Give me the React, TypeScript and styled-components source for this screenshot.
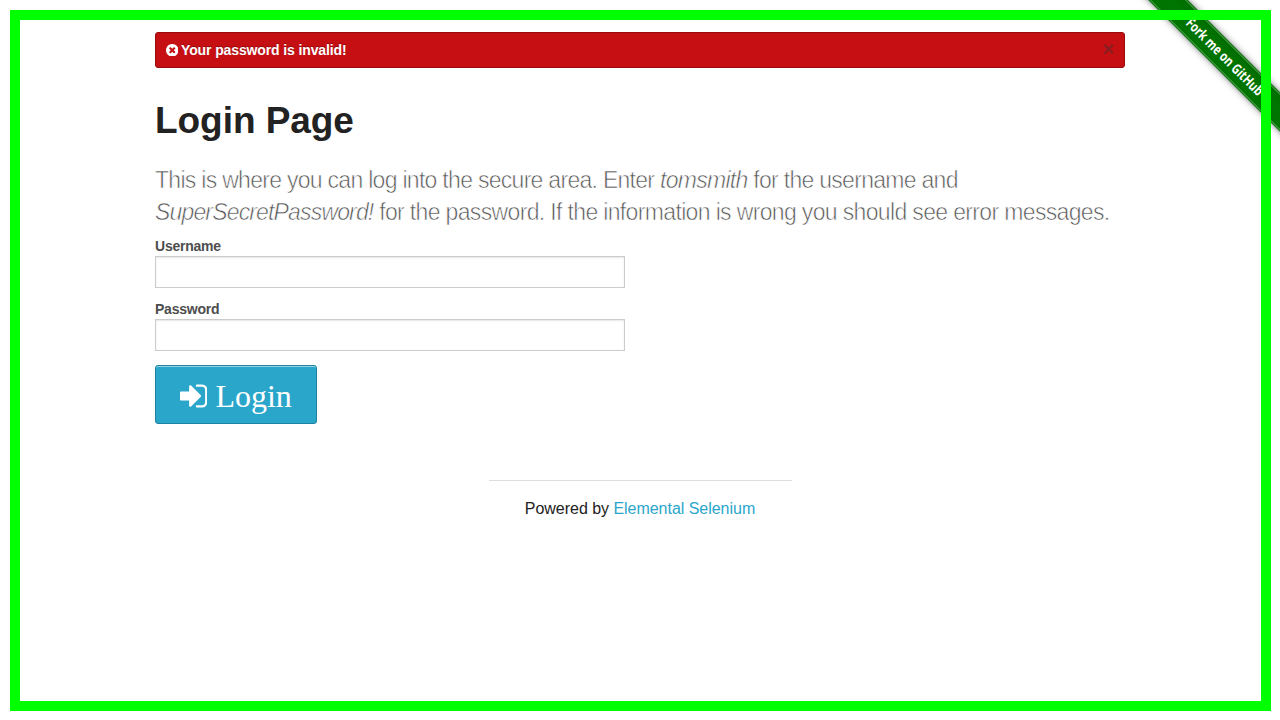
import React from "react";
import styled, { createGlobalStyle } from "styled-components";

const GlobalStyle = createGlobalStyle`
  * { box-sizing: border-box; }
  body { margin: 0; background: #fff; color: #222; overflow: hidden;
    font-family: "Liberation Sans", Arial, sans-serif; font-size: 16px; }
`;

const Page = styled.div`
  position: relative;
  width: 1280px;
  height: 720px;
  overflow: hidden;
  padding-top: 32px;
`;

const Frame = styled.div`
  position: absolute;
  left: 10px;
  top: 10px;
  width: 1261px;
  height: 701px;
  border: 10px solid #00ff00;
  pointer-events: none;
`;

const RibbonBox = styled.a`
  position: absolute;
  top: 0;
  right: 0;
  width: 149px;
  height: 149px;
  overflow: hidden;
`;

const Ribbon = styled.span`
  position: absolute;
  left: -31.5px;
  top: 43px;
  width: 250px;
  height: 28px;
  padding: 1px 0;
  background: linear-gradient(#006c00, #007500 45%, #007200);
  box-shadow: 0 0 6px rgba(0, 0, 0, 0.5);
  transform: rotate(45deg);
`;

const RibbonLabel = styled.span`
  display: block;
  height: 26px;
  border: solid #4c9c4c;
  border-width: 1px 0;
  color: #fff;
  font: bold 14px/23px "Open Sans", "Noto Sans", sans-serif;
  text-align: center;
  white-space: nowrap;
`;

const RibbonText = styled.span`
  display: inline-block;
  transform: scaleX(0.78);
`;

const Container = styled.main`
  width: 970px;
  margin: 0 auto;
`;

const Alert = styled.div`
  display: flex;
  align-items: center;
  height: 36px;
  padding: 0 10px;
  background: #c60f13;
  border: 1px solid #970b0e;
  border-radius: 3px;
  color: #fff;
  font-size: 14px;
  font-weight: bold;
  letter-spacing: -0.12px;
  text-shadow: 0 -1px rgba(0, 0, 0, 0.3);
`;

const AlertIcon = styled.svg`
  width: 12.5px;
  height: 12.5px;
  margin: 0 3px 0 -0.5px;
  fill: #fff;
`;

const Close = styled.span`
  margin: -2px 0 0 auto;
  color: #333;
  opacity: 0.4;
  font-size: 20px;
  line-height: 20px;
  font-weight: bold;
  text-shadow: none;
`;

const Title = styled.h1`
  margin: 31px 0 0;
  font-size: 37px;
  line-height: 44px;
  font-weight: bold;
  letter-spacing: -0.05px;
`;

const Lead = styled.p`
  margin: 21px 0 0;
  color: #555;
  font-size: 23px;
  line-height: 32px;
  -webkit-text-stroke: 0.6px #fff;
`;

const Line = styled.span<{ $spacing: string }>`
  display: block;
  white-space: nowrap;
  letter-spacing: ${(p) => p.$spacing};
`;

const Secret = styled.em`
  letter-spacing: -0.84px;
`;

const Form = styled.form`
  display: flex;
  flex-direction: column;
  align-items: flex-start;
  padding-top: 8px;
`;

const Label = styled.label`
  color: #4d4d4d;
  font-size: 14px;
  font-weight: bold;
  line-height: 20px;
  letter-spacing: -0.23px;
`;

const Input = styled.input`
  width: 470px;
  height: 32px;
  margin: 0 0 11px;
  padding: 0 5px;
  border: 1px solid #ccc;
  border-radius: 0;
  background: #fff;
  box-shadow: inset 0 1px 2px rgba(0, 0, 0, 0.1);
  outline: none;
`;

const Button = styled.button`
  display: flex;
  align-items: center;
  width: 162px;
  height: 59px;
  margin-top: 3px;
  padding: 3px 0 0 24px;
  border: 1px solid #1e83a3;
  border-radius: 3px;
  background: #2ba6cb;
  box-shadow: inset 0 1px 0 rgba(255, 255, 255, 0.5);
  color: #fff;
  font: 32px/36px "Liberation Serif", "Times New Roman", serif;
`;

const ButtonIcon = styled.svg`
  width: 27.4px;
  height: 32px;
  margin: -1px 8px 0 0;
  fill: #fff;
`;

const Footer = styled.footer`
  width: 303px;
  margin: 56px auto 0;
  padding-top: 17px;
  border-top: 1px solid #ddd;
  text-align: center;
  line-height: 22px;
  letter-spacing: -0.03px;
  white-space: nowrap;
`;

const Link = styled.a`
  color: #2ba6cb;
  text-decoration: none;
`;

export default function App() {
  return (
    <Page>
      <GlobalStyle />
      <RibbonBox>
        <Ribbon>
          <RibbonLabel>
            <RibbonText>Fork me on GitHub</RibbonText>
          </RibbonLabel>
        </Ribbon>
      </RibbonBox>
      <Container>
        <Alert>
          <AlertIcon viewBox="128 128 1536 1536">
            <path d="M1277 1122q0-26-19-45l-181-181 181-181q19-19 19-45 0-27-19-46l-90-90q-19-19-46-19-26 0-45 19l-181 181-181-181q-19-19-45-19-27 0-46 19l-90 90q-19 19-19 46 0 26 19 45l181 181-181 181q-19 19-19 45 0 27 19 46l90 90q19 19 46 19 26 0 45-19l181-181 181 181q19 19 45 19 27 0 46-19l90-90q19-19 19-46zm387-226q0 209-103 385.5t-279.5 279.5-385.5 103-385.5-103-279.5-279.5-103-385.5 103-385.5 279.5-279.5 385.5-103 385.5 103 279.5 279.5 103 385.5z" />
          </AlertIcon>
          Your password is invalid!
          <Close>×</Close>
        </Alert>
        <Title>Login Page</Title>
        <Lead>
          <Line $spacing="-0.71px">
            This is where you can log into the secure area. Enter <em>tomsmith</em> for the username and
          </Line>
          <Line $spacing="-0.65px">
            <Secret>SuperSecretPassword!</Secret> for the password. If the information is wrong you should see error messages.
          </Line>
        </Lead>
        <Form onSubmit={(e) => e.preventDefault()}>
          <Label htmlFor="username">Username</Label>
          <Input id="username" type="text" />
          <Label htmlFor="password">Password</Label>
          <Input id="password" type="password" />
          <Button type="submit">
            <ButtonIcon viewBox="0 0 1536 1792">
              <path d="M1184 896q0 26-19 45l-544 544q-19 19-45 19t-45-19-19-45v-288h-448q-26 0-45-19t-19-45v-384q0-26 19-45t45-19h448v-288q0-26 19-45t45-19 45 19l544 544q19 19 19 45zm352-352v704q0 119-84.5 203.5t-203.5 84.5h-320q-13 0-22.5-9.5t-9.5-22.5q0-4-1-20t-.5-26.5 3-23.5 10-19.5 20.5-6.5h320q66 0 113-47t47-113v-704q0-66-47-113t-113-47h-312l-11.5-1-11.5-3-8-5.5-7-9-2-13.5q0-4-1-20t-.5-26.5 3-23.5 10-19.5 20.5-6.5h320q119 0 203.5 84.5t84.5 203.5z" />
            </ButtonIcon>
            Login
          </Button>
        </Form>
        <Footer>
          Powered by <Link>Elemental Selenium</Link>
        </Footer>
      </Container>
      <Frame />
    </Page>
  );
}
